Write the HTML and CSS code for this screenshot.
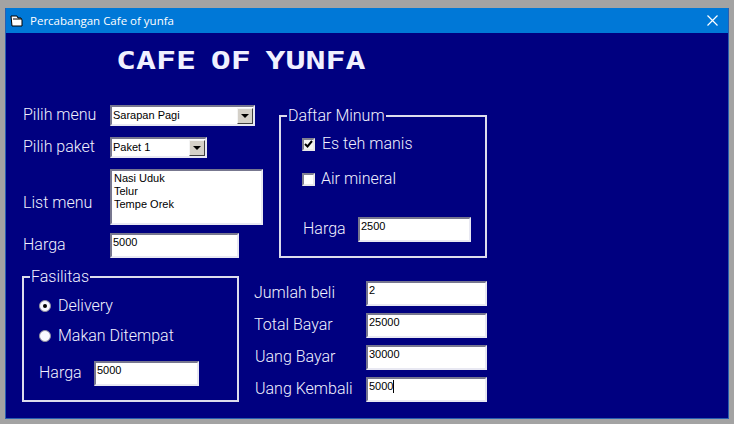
FILE: index.html
```html
<!DOCTYPE html>
<html lang="id">
<head>
<meta charset="utf-8">
<title>Percabangan Cafe of yunfa</title>
<link rel="stylesheet" href="styles.css">
</head>
<body>
<div class="window">
  <div class="titlebar">
    <svg class="app-icon" width="13" height="12" viewBox="0 0 13 12"><path d="M1 1h6l1 2h3l1 2v6H2z" fill="#fff" stroke="#000"/><path d="M3 4h8" stroke="#000"/></svg>
    <span class="title-text">Percabangan Cafe of yunfa</span>
    <svg class="close" width="11" height="11" viewBox="0 0 11 11"><path d="M.5.5l10 10M10.5.5l-10 10" stroke="#fff" stroke-width="1.2" fill="none"/></svg>
  </div>
  <div class="form">
    <h1 class="brand"><span>CAFE OF YUNFA</span></h1>
    <div class="top">
      <div class="menu-col">
        <div class="row row-menu"><span class="label w-left">Pilih menu</span>
          <div class="combo combo-wide"><span class="txt">Sarapan Pagi</span><span class="arrow"></span></div></div>
        <div class="row row-paket"><span class="label w-left">Pilih paket</span>
          <div class="combo combo-small"><span class="txt">Paket 1</span><span class="arrow"></span></div></div>
        <div class="row row-list"><span class="label w-left list-label">List menu</span>
          <div class="sunken listbox"><div>Nasi Uduk</div><div>Telur</div><div>Tempe Orek</div></div></div>
        <div class="row row-harga"><span class="label w-left">Harga</span>
          <div class="sunken field field-harga">5000</div></div>
      </div>
      <div class="group minum">
        <div class="legend">Daftar Minum</div>
        <div class="check-row first"><span class="check on"><svg width="9" height="8" viewBox="0 0 9 8"><path d="M1 4l2.5 2.5L8 1" stroke="#000" stroke-width="2" fill="none"/></svg></span><span class="label">Es teh manis</span></div>
        <div class="check-row second"><span class="check"></span><span class="label">Air mineral</span></div>
        <div class="row harga-minum"><span class="label">Harga</span><div class="sunken field field-minum">2500</div></div>
      </div>
    </div>
    <div class="bottom">
      <div class="group fasilitas">
        <div class="legend">Fasilitas</div>
        <div class="radio-row r1"><span class="radio on"></span><span class="label">Delivery</span></div>
        <div class="radio-row r2"><span class="radio"></span><span class="label">Makan Ditempat</span></div>
        <div class="row harga-fas"><span class="label">Harga</span><div class="sunken field field-fas">5000</div></div>
      </div>
      <div class="pay">
        <div class="row"><span class="label w-pay">Jumlah beli</span><div class="sunken field field-pay">2</div></div>
        <div class="row"><span class="label w-pay">Total Bayar</span><div class="sunken field field-pay">25000</div></div>
        <div class="row"><span class="label w-pay inset">Uang Bayar</span><div class="sunken field field-pay">30000</div></div>
        <div class="row"><span class="label w-pay inset">Uang Kembali</span><div class="sunken field field-pay"><span class="caret">5000</span></div></div>
      </div>
    </div>
  </div>
</div>
</body>
</html>
```
FILE: styles.css
```css
* { box-sizing: border-box; margin: 0; padding: 0; }
html, body { width: 734px; height: 424px; overflow: hidden; }
body { background: #a3a3a3; padding: 8px 5px 5px 5px; font-family: "Liberation Sans", Arial, sans-serif; }
.window { width: 724px; height: 411px; background: #000080; display: flex; flex-direction: column; border: solid #2a5fb0; border-width: 0 1px 1px 1px; }
.titlebar { height: 25px; background: #0078d7; display: flex; align-items: center; padding: 0 10px 0 4px; flex: none; }
.app-icon { flex: none; }
.title-text { margin-left: 7px; color: #fff; font: 11.5px/16px "Open Sans", sans-serif; white-space: nowrap; }
.close { margin-left: auto; flex: none; }
.form { flex: 1; position: relative; padding: 18px 0 0 16px; }
.brand { height: 20px; margin-left: 94px; color: #f0f0ff; font: bold 25px/20px "DejaVu Sans Mono", monospace; }
.brand span { display: inline-block; transform: scaleX(1.33); transform-origin: left center; word-spacing: -4px; white-space: nowrap; }
.top { display: flex; margin-top: 34px; }
.bottom { display: flex; margin-top: 18px; }
.menu-col { width: 257px; flex: none; }
.row { display: flex; align-items: center; }
.label { color: #f2f2ff; font: 300 16px/20px Roboto, "Liberation Sans", sans-serif; white-space: nowrap; padding-bottom: 1px; }
.w-left { width: 87px; flex: none; margin-left: 1px; }
.row-paket { margin-top: 11px; }
.row-list { margin-top: 11px; }
.row-harga { margin-top: 8px; }
.list-label { align-self: flex-end; margin-bottom: 11px; }
.sunken { background: #fff; border-style: solid; border-width: 2px; border-color: #77778f #e8e8f2 #e8e8f2 #77778f; color: #000; font-size: 11px; line-height: 13px; }
.combo { height: 21px; background: #fff; border: 2px solid; border-color: #77778f #e8e8f2 #e8e8f2 #77778f; display: flex; align-items: center; justify-content: space-between; color: #000; font-size: 11px; }
.txt { padding: 0 0 1px 1px; }
.combo-wide { width: 145px; }
.combo-small { width: 97px; }
.arrow { width: 16px; height: 16px; background: #d4d0c8; border: 1px solid; border-color: #f4f4f4 #404040 #404040 #f4f4f4; position: relative; flex: none; }
.arrow::after { content: ""; position: absolute; left: 3px; top: 5px; border: 4px solid transparent; border-top-color: #000; border-bottom: 0; }
.listbox { width: 153px; height: 56px; padding: 1px 2px; line-height: 13px; }
.field { height: 25px; padding: 1px 0 0 1px; }
.field-harga { width: 129px; }
.group { position: relative; border: 2px solid #dcdcec; }
.legend { position: absolute; top: -11px; left: 6px; padding: 0 1px 0 1px; background: #000080; color: #f2f2ff; font: 300 16px/20px Roboto, "Liberation Sans", sans-serif; white-space: nowrap; }
.minum { width: 208px; height: 143px; margin-top: 10px; padding: 0 14px 0 21px; }
.check-row { display: flex; align-items: center; height: 20px; }
.check-row.first { margin-top: 17px; }
.check-row.second { margin-top: 15px; }
.check { width: 13px; height: 13px; background: #fff; border: 2px solid; border-color: #808090 #e8e8e8 #e8e8e8 #808090; display: flex; align-items: center; justify-content: center; margin-right: 7px; flex: none; }
.check.on { background: #f4f4f4; }
.second .check { margin-right: 6px; }
.harga-minum { margin-top: 28px; margin-left: 1px; }
.harga-minum .label { width: 55px; flex: none; }
.field-minum { width: 113px; }
.fasilitas { width: 217px; height: 126px; flex: none; padding: 0 0 0 15px; }
.radio-row { display: flex; align-items: center; height: 20px; }
.r1 { margin-top: 18px; }
.r2 { margin-top: 10px; }
.radio { width: 12px; height: 12px; border-radius: 50%; background: #f8f8ff; border: 1px solid #9090a0; margin-right: 7px; flex: none; position: relative; }
.radio.on::after { content: ""; position: absolute; left: 3px; top: 3px; width: 4px; height: 4px; border-radius: 50%; background: #000; }
.harga-fas { margin-top: 15px; }
.harga-fas .label { width: 55px; flex: none; }
.field-fas { width: 105px; }
.pay { margin-left: 15px; margin-top: 5px; display: flex; flex-direction: column; gap: 7px; }
.w-pay { width: 112px; flex: none; }
.inset { padding-left: 1px; }
.field-pay { width: 121px; }
.caret { border-right: 1px solid #000; display: inline-block; line-height: 13px; }
```
